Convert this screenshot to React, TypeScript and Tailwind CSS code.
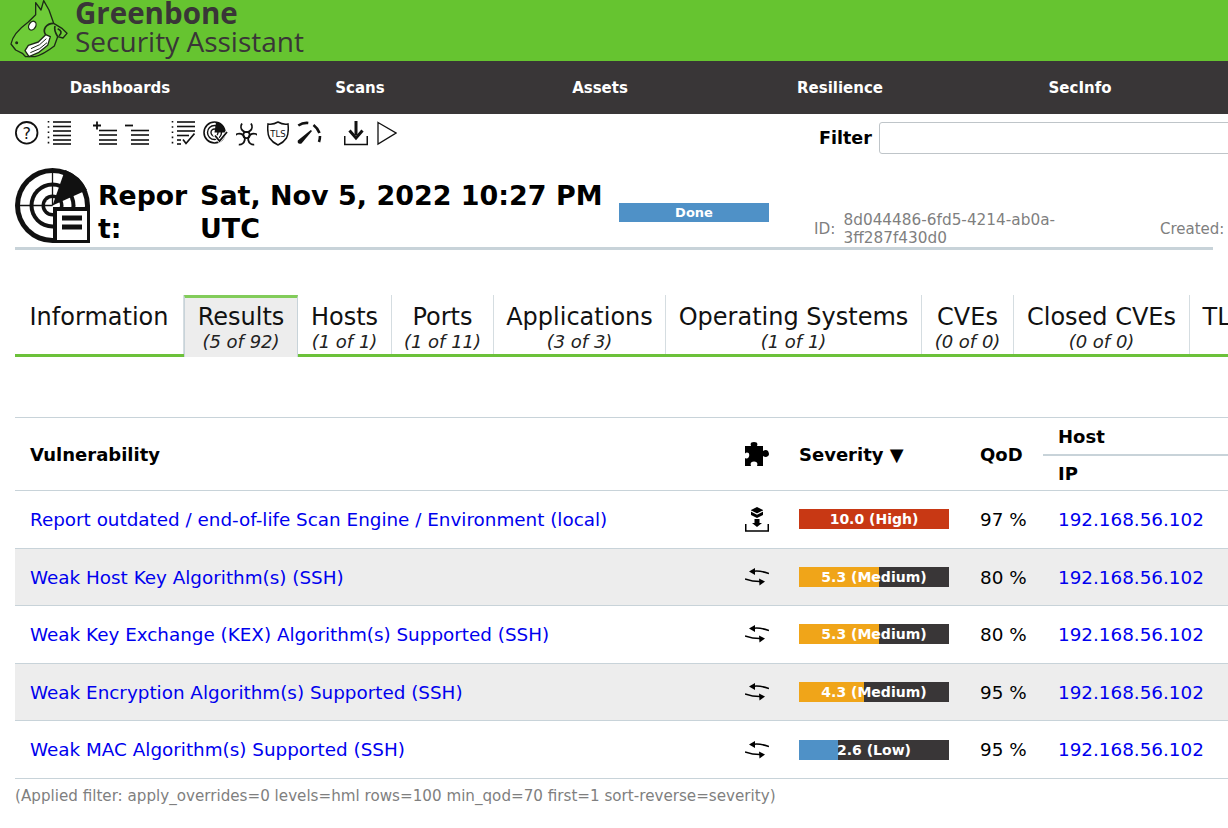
import type { ReactNode } from 'react';

const FONT = "font-['DejaVu_Sans',Verdana,sans-serif]";

const NAV = ['Dashboards', 'Scans', 'Assets', 'Resilience', 'SecInfo'];

const TABS = [
    { label: 'Information', count: '', width: 'w-[169px]' },
    { label: 'Results', count: '(5 of 92)', width: 'w-[114px]', active: true },
    { label: 'Hosts', count: '(1 of 1)', width: 'w-[94px]' },
    { label: 'Ports', count: '(1 of 11)', width: 'w-[102px]' },
    { label: 'Applications', count: '(3 of 3)', width: 'w-[172px]' },
    { label: 'Operating Systems', count: '(1 of 1)', width: 'w-[256px]' },
    { label: 'CVEs', count: '(0 of 0)', width: 'w-[92px]' },
    { label: 'Closed CVEs', count: '(0 of 0)', width: 'w-[176px]' },
    { label: 'TLS Certificates', count: '(0 of 0)', width: 'w-[214px]' },
];

type Row = {
    name: string;
    icon: 'package' | 'remote';
    severity: string;
    fill: number;
    color: string;
    qod: string;
};

const ROWS: Row[] = [
    { name: 'Report outdated / end-of-life Scan Engine / Environment (local)', icon: 'package', severity: '10.0 (High)', fill: 100, color: 'bg-[#c83814]', qod: '97 %' },
    { name: 'Weak Host Key Algorithm(s) (SSH)', icon: 'remote', severity: '5.3 (Medium)', fill: 53, color: 'bg-[#f0a519]', qod: '80 %' },
    { name: 'Weak Key Exchange (KEX) Algorithm(s) Supported (SSH)', icon: 'remote', severity: '5.3 (Medium)', fill: 53, color: 'bg-[#f0a519]', qod: '80 %' },
    { name: 'Weak Encryption Algorithm(s) Supported (SSH)', icon: 'remote', severity: '4.3 (Medium)', fill: 43, color: 'bg-[#f0a519]', qod: '95 %' },
    { name: 'Weak MAC Algorithm(s) Supported (SSH)', icon: 'remote', severity: '2.6 (Low)', fill: 26, color: 'bg-[#4f91c7]', qod: '95 %' },
];

// drawn in the coordinates of a 3x crop, hence the 204x186 viewBox
function Logo() {
    return (
        <svg width="68" height="61" viewBox="0 0 204 183" className="shrink-0">
            <path
                d="M18 132 C22 108 40 88 70 66 L92 44 L92 8 L108 30 L116 2 L132 30 L146 70 L172 86 L186 100 L174 114 L158 110 L148 138 C130 152 110 165 90 170 L62 170 L52 160 L32 150 Z"
                fill="#6ecb38"
                stroke="#1d2b17"
                strokeWidth="4"
                strokeLinejoin="round"
            />
            <path d="M60 152 L70 136 L100 126 L122 104 L136 110 L128 136 L100 158 L72 170 Z" fill="#fff" stroke="#1d2b17" strokeWidth="4" strokeLinejoin="round" />
            <path d="M78 146 L104 134 L124 116 M76 158 L104 146 L126 128" fill="none" stroke="#1d2b17" strokeWidth="3" />
            <ellipse cx="82" cy="77" rx="10" ry="14" transform="rotate(30 82 77)" fill="#fff" stroke="#1d2b17" strokeWidth="4" />
            <path d="M146 70 C122 70 112 90 122 104 M150 78 Q146 90 158 110 M158 86 Q176 94 162 108" fill="none" stroke="#1d2b17" strokeWidth="5" />
            <circle cx="35" cy="128" r="4.5" fill="#1d2b17" />
        </svg>
    );
}

function Icon({ w, ml = 0, children }: { w: number; ml?: number; children: ReactNode }) {
    return (
        <svg width={w} height="25" viewBox={`0 0 ${w} 25`} className="shrink-0" style={{ marginLeft: ml }}>
            {children}
        </svg>
    );
}

const Lines = ({ x1, x2, ys }: { x1: number; x2: number; ys: number[] }) => (
    <g stroke="#111" strokeWidth="1.6">
        {ys.map((y) => (
            <path key={y} d={`M${x1} ${y} H${x2}`} />
        ))}
    </g>
);

const Dots = () => <path d="M1.5 0 V25" stroke="#111" strokeWidth="1.6" strokeDasharray="1.6 3.6" />;

function Toolbar() {
    return (
        <div className="flex h-[36px] items-start pl-[15px] pt-[7px]">
            <Icon w={24}>
                <circle cx="11.7" cy="11.8" r="10.8" fill="none" stroke="#111" strokeWidth="1.8" />
                <text x="11.7" y="17.5" textAnchor="middle" fontSize="16" fill="#111" fontFamily="DejaVu Sans">
                    ?
                </text>
            </Icon>
            <Icon w={24} ml={8}>
                <Dots />
                <Lines x1={6} x2={24} ys={[1, 5.5, 10, 14.5, 19, 23]} />
            </Icon>
            <Icon w={24} ml={22}>
                <path d="M0 4.5 H8 M4 0.5 V8.5" stroke="#111" strokeWidth="1.8" />
                <Lines x1={6} x2={24} ys={[9.5, 14, 19, 23]} />
            </Icon>
            <Icon w={24} ml={8}>
                <path d="M0 4.5 H8" stroke="#111" strokeWidth="1.8" />
                <Lines x1={6} x2={24} ys={[9.5, 14, 19, 23]} />
            </Icon>
            <Icon w={24} ml={22}>
                <Dots />
                <Lines x1={6} x2={24} ys={[1, 5.5, 10]} />
                <Lines x1={6} x2={18} ys={[14.5]} />
                <Lines x1={6} x2={10} ys={[19, 23]} />
                <path d="M12 18.5 L15 22.5 L23.5 12.5" fill="none" stroke="#111" strokeWidth="1.7" />
            </Icon>
            <Icon w={25} ml={8}>
                <g fill="none" stroke="#111">
                    <circle cx="11.5" cy="11.5" r="10.5" strokeWidth="1.6" />
                    <circle cx="11.5" cy="11.5" r="7" strokeWidth="1.4" />
                    <circle cx="11.5" cy="11.5" r="3.5" strokeWidth="1.4" />
                </g>
                <path d="M11.5 11.5 L13 1 A10.5 10.5 0 0 1 22 11.5 Z" fill="#111" />
                <path d="M11 13 L16.5 20 L24 11" fill="none" stroke="#fff" strokeWidth="3.5" />
                <path d="M12 14.5 L16.5 20 L24 11" fill="none" stroke="#111" strokeWidth="1.8" />
            </Icon>
            <Icon w={21} ml={8}>
                <g fill="none" stroke="#111" strokeWidth="1.8">
                    <circle cx="10.5" cy="14" r="3.2" />
                    <path d="M6 2.5 A5.5 5.5 0 1 0 15 2.5" />
                    <path d="M6 2.5 A5.5 5.5 0 1 0 15 2.5" transform="rotate(120 10.5 14)" />
                    <path d="M6 2.5 A5.5 5.5 0 1 0 15 2.5" transform="rotate(240 10.5 14)" />
                </g>
            </Icon>
            <Icon w={22} ml={10}>
                <path d="M11 1 Q16 4 21 3 Q22 12 19.5 17 Q16.5 21.5 11 24 Q5.5 21.5 2.5 17 Q0 12 1 3 Q6 4 11 1 Z" fill="none" stroke="#111" strokeWidth="1.5" />
                <text x="11" y="15.5" textAnchor="middle" fontSize="8.5" fill="#111" fontFamily="DejaVu Sans">
                    TLS
                </text>
            </Icon>
            <Icon w={25} ml={8}>
                <g fill="none" stroke="#111" strokeWidth="2.6">
                    <path d="M1.3 4.5 Q6 1.4 11.3 2" />
                    <path d="M16.5 4 Q21 7.5 22.5 12" />
                    <path d="M23 15 Q23 18 22 21" />
                </g>
                <path d="M0.8 19.5 Q0 23.5 4.5 22.5 L15 10 L13.8 9 Z" fill="#111" />
            </Icon>
            <Icon w={24} ml={22}>
                <path d="M12 0 V14" stroke="#111" strokeWidth="3" />
                <path d="M5.5 9.5 L12 17 L18.5 9.5" fill="none" stroke="#111" strokeWidth="3" />
                <path d="M0.75 15 V23.5 H23.25 V15" fill="none" stroke="#111" strokeWidth="1.5" />
            </Icon>
            <Icon w={20} ml={9}>
                <path d="M1 1.5 L19 12 L1 23 Z" fill="none" stroke="#111" strokeWidth="1.3" />
            </Icon>
            <div className="ml-[422px] mt-[1px] flex items-center">
                <span className="mr-[7px] mt-[1px] text-[17.5px] font-bold text-black">Filter</span>
                <div className="h-[32px] w-[400px] shrink-0 rounded-[3px] border border-[#bfc5c9] bg-white" />
            </div>
        </div>
    );
}

function ReportIcon() {
    return (
        <svg width="75" height="75" viewBox="0 0 75 75" className="shrink-0">
            <path d="M75 75 H37.5 A37.5 37.5 0 1 1 75 37.5 Z" fill="#111" />
            <circle cx="37.5" cy="37.5" r="32.5" fill="#fff" />
            <circle cx="37.5" cy="37.5" r="23" fill="#111" />
            <circle cx="37.5" cy="37.5" r="19" fill="#fff" />
            <circle cx="37.5" cy="37.5" r="11" fill="#111" />
            <circle cx="37.5" cy="37.5" r="7.5" fill="#fff" />
            <path d="M37.5 37.5 H3 M37.5 37.5 V3" stroke="#111" strokeWidth="1.3" />
            <path d="M37.5 37.5 L50 2 A37.5 37.5 0 0 1 72 22 Z" fill="#111" />
            <path d="M38 75 V39 H75 V75 Z" fill="#111" />
            <path d="M42 43 H72 V72 H42 Z" fill="#fff" />
            <path d="M47 50 H67 M47 59 H67" stroke="#111" strokeWidth="5" />
        </svg>
    );
}

function ReportHeader() {
    return (
        <div className="mx-[15px] flex h-[100px] items-start border-b-[3px] border-[#c8d3d9] pt-[18px]">
            <div className="w-[77px] shrink-0">
                <ReportIcon />
            </div>
            <h2 className="ml-[6px] mt-[11px] w-[102px] shrink-0 text-[26.7px] font-bold leading-[33px] break-all text-black">
                Report:
            </h2>
            <h2 className="mt-[11px] w-[419px] shrink-0 text-[26.95px] font-bold leading-[33px] text-black">
                Sat, Nov 5, 2022 10:27 PM UTC
            </h2>
            <div className="mt-[35px] h-[19px] w-[150px] shrink-0 bg-[#4f91c7] text-center text-[13px] leading-[20px] font-bold text-white">
                Done
            </div>
            <div className="ml-[45px] mt-[43px] flex w-[250px] shrink-0 items-center text-[15.3px] leading-[18px] text-[#7f7f7f]">
                <span className="mr-[8px]">ID:</span>
                <span>8d044486-6fd5-4214-ab0a-3ff287f430d0</span>
            </div>
            <div className="ml-[96px] mt-[52px] shrink-0 text-[15px] leading-[18px] text-[#7f7f7f]">Created:</div>
        </div>
    );
}

function Tabs() {
    return (
        <div className="mx-[15px] mt-[45px] flex h-[62px] w-[1400px] items-stretch border-b-[3px] border-[#6cc13a]">
            {TABS.map((tab) => (
                <div
                    key={tab.label}
                    className={`relative flex shrink-0 flex-col items-center text-center ${tab.width} ${
                        tab.active
                            ? '-mb-[3px] border-x border-t-[3px] border-x-[#c8d3d9] border-t-[#82cc5a] bg-[#ededed] pt-[1px]'
                            : 'border-r border-[#d5dde1] pt-[4px]'
                    }`}
                >
                    <span className="text-[24px] leading-[36px] whitespace-nowrap text-[#111]">{tab.label}</span>
                    {tab.count && <span className="-mt-[2px] text-[18px] leading-[18px] text-[#222] italic">{tab.count}</span>}
                </div>
            ))}
        </div>
    );
}

function PuzzleIcon() {
    return (
        <svg width="24" height="24" viewBox="0 0 24 24" className="block">
            <path
                d="M0 4 H6 Q4.5 0 9 0 Q13.5 0 12 4 H18 V9 Q21 7 23 9 Q25 12.5 23 14 Q21 16 18 14 V24 H12 Q13.5 19.5 9 19.5 Q4.5 19.5 6 24 H0 V16 Q3 17.5 4 14.5 Q5 10.5 2 10.5 Q1 10.5 0 11.5 Z"
                fill="#000"
            />
        </svg>
    );
}

function PackageIcon() {
    return (
        <svg width="24" height="25" viewBox="0 0 24 25" className="block">
            <path d="M12 0 L18 3 L18 8 L12 11 L6 8 L6 3 Z" fill="#000" />
            <path d="M6 4 L12 7 L18 4" fill="none" stroke="#fff" strokeWidth="1.2" />
            <path d="M9.5 12 H14.5 V16 H17 L12 20 L7 16 H9.5 Z" fill="#000" />
            <path d="M0.75 17 V24 H23.25 V17" fill="none" stroke="#000" strokeWidth="1.5" />
        </svg>
    );
}

function RemoteIcon() {
    return (
        <svg width="24" height="18" viewBox="0 0 24 18" className="block">
            <path d="M24 5.5 Q14 2 7 3.5" fill="none" stroke="#000" strokeWidth="1.6" />
            <path d="M4 3.5 L10 0 L10 7 Z" fill="#000" />
            <path d="M0 11 Q9 14 17 13.5" fill="none" stroke="#000" strokeWidth="1.6" />
            <path d="M20 13.5 L14.5 17.5 L14 10.5 Z" fill="#000" />
        </svg>
    );
}

function SeverityBar({ row }: { row: Row }) {
    return (
        <div className="relative h-[20px] w-[150px] bg-[#393637] text-center text-[14px] leading-[20px] font-bold text-white">
            <div className={`absolute inset-y-0 left-0 ${row.color}`} style={{ width: `${row.fill}%` }} />
            <span className="relative">{row.severity}</span>
        </div>
    );
}

function ResultsTable() {
    return (
        <table className="mx-[15px] mt-[60px] w-[1400px] table-fixed border-collapse text-[18.35px] text-black">
            <colgroup>
                <col className="w-[715px]" />
                <col className="w-[54px]" />
                <col className="w-[180px]" />
                <col className="w-[79px]" />
                <col />
            </colgroup>
            <thead>
                <tr className="h-[37px] border-t border-[#c8d3d9]">
                    <th rowSpan={2} className="pl-[15px] text-left text-[18px] font-bold">Vulnerability</th>
                    <th rowSpan={2} className="pl-[15px] text-left">
                        <div className="-mt-[1px]"><PuzzleIcon /></div>
                    </th>
                    <th rowSpan={2} className="pl-[15px] text-left text-[18px] font-bold">Severity ▼</th>
                    <th rowSpan={2} className="pl-[16px] text-left text-[18px] font-bold">QoD</th>
                    <th className="border-b-2 border-[#c8d3d9] pl-[15px] pt-[2px] text-left text-[18px] font-bold">Host</th>
                </tr>
                <tr className="h-[36px]">
                    <th className="pl-[15px] pt-[2px] text-left text-[18px] font-bold">IP</th>
                </tr>
            </thead>
            <tbody>
                {ROWS.map((row, i) => (
                    <tr key={row.name} className={`h-[57.6px] border-t border-[#c8d3d9] ${i % 2 === 1 ? 'bg-[#ededed]' : 'bg-white'}`}>
                        <td className="pl-[15px] pt-[1px] text-[#0000ee]">{row.name}</td>
                        <td className="pl-[15px]">{row.icon === 'package' ? <PackageIcon /> : <RemoteIcon />}</td>
                        <td className="pl-[15px]"><SeverityBar row={row} /></td>
                        <td className="pl-[16px] pt-[1px]">{row.qod}</td>
                        <td className="pl-[15px] pt-[1px] text-[#0000ee]">192.168.56.102</td>
                    </tr>
                ))}
                <tr className="border-t border-[#c8d3d9]"><td colSpan={5} /></tr>
            </tbody>
        </table>
    );
}

export default function App() {
    return (
        <div className={`h-[828px] w-[1228px] overflow-hidden bg-white ${FONT}`}>
            <header className="flex h-[61px] items-start bg-[#66c430] pl-[5px] text-[#393637]">
                <Logo />
                <div className="ml-[2px] -mt-[4px] font-['Open_Sans',sans-serif]">
                    <div className="text-[29.5px] leading-[34px] font-bold">Greenbone</div>
                    <div className="-mt-[5px] text-[28px] leading-[32px]">Security Assistant</div>
                </div>
            </header>
            <nav className="flex h-[53px] items-center bg-[#393637] pt-[1px]">
                {NAV.map((item) => (
                    <div key={item} className="w-[240px] shrink-0 text-center text-[15px] font-bold text-white">
                        {item}
                    </div>
                ))}
            </nav>
            <Toolbar />
            <ReportHeader />
            <Tabs />
            <ResultsTable />
            <p className="ml-[15px] mt-[6px] text-[15.15px] text-[#7f7f7f]">
                (Applied filter: apply_overrides=0 levels=hml rows=100 min_qod=70 first=1 sort-reverse=severity)
            </p>
        </div>
    );
}
